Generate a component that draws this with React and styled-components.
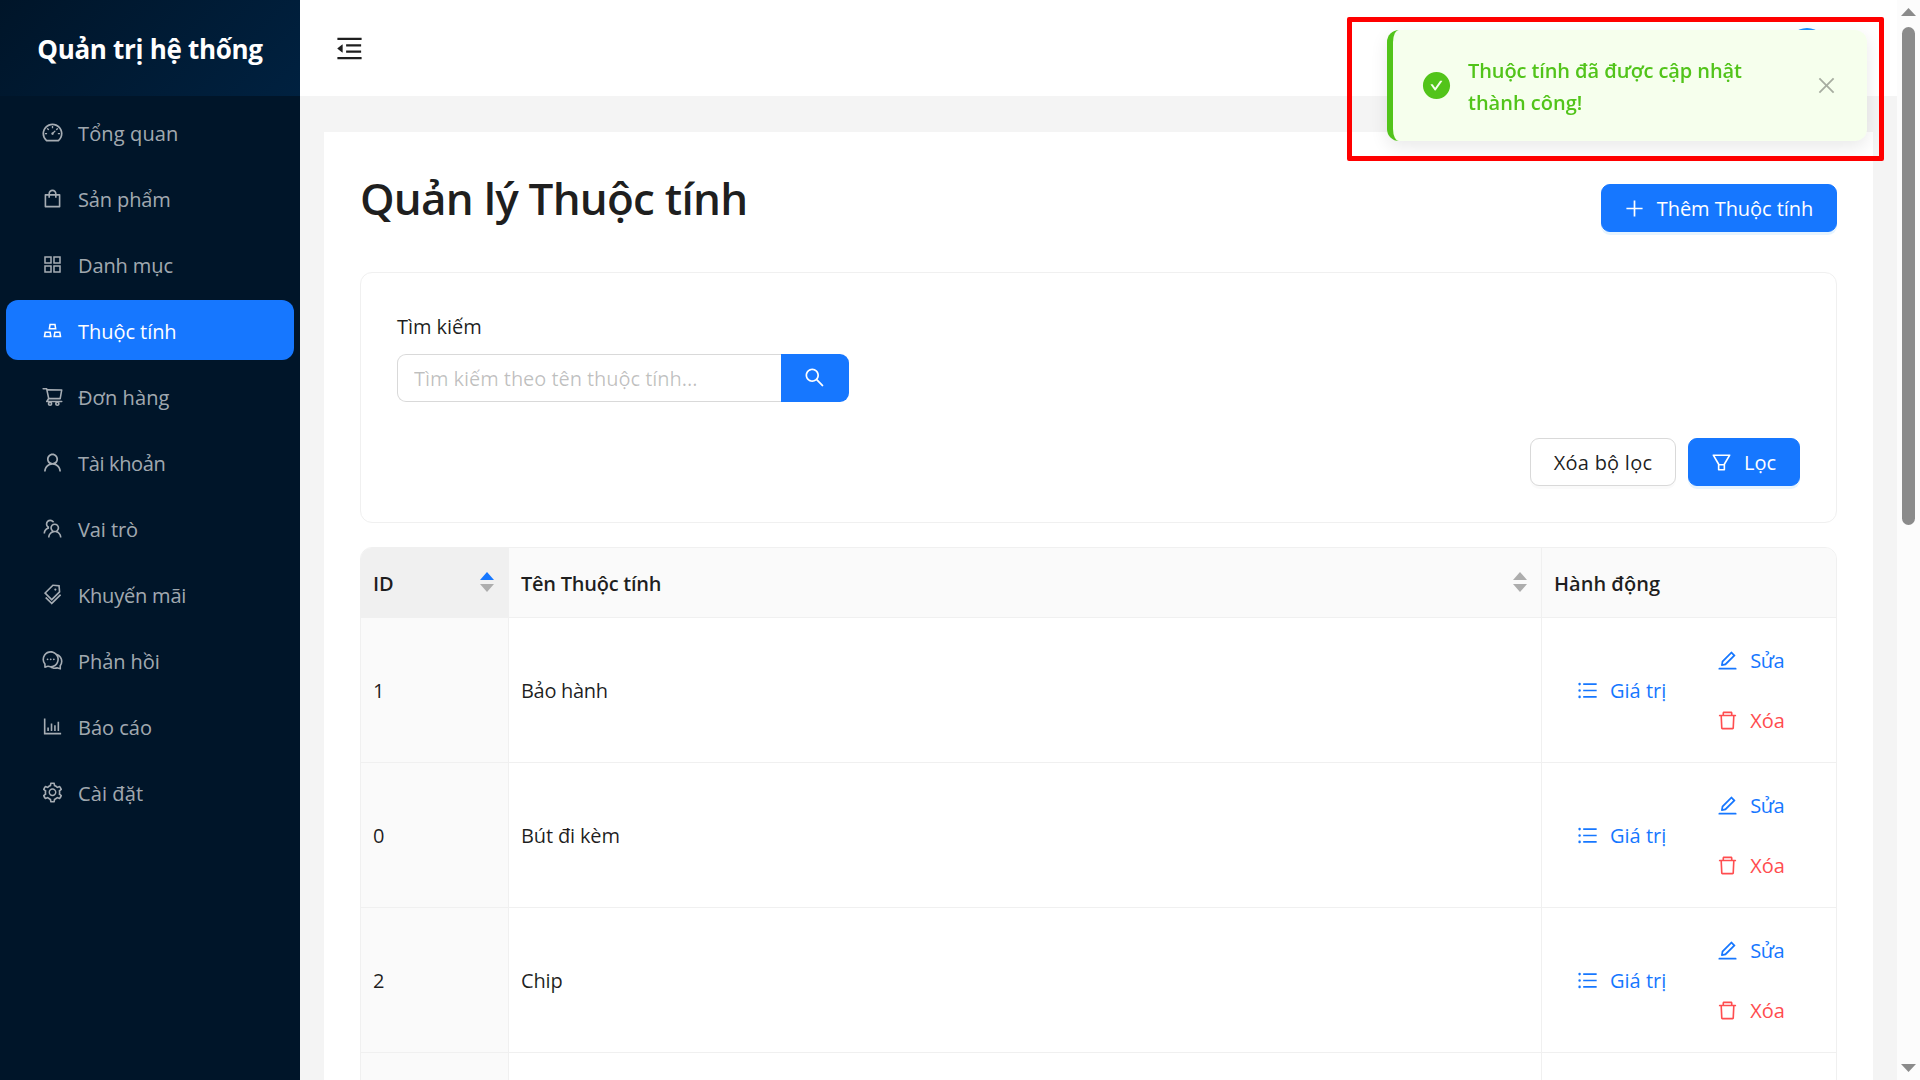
import React from "react";
import styled, { createGlobalStyle, css } from "styled-components";
import {
  AiOutlineDashboard,
  AiOutlineShopping,
  AiOutlineAppstore,
  AiOutlineGold,
  AiOutlineShoppingCart,
  AiOutlineUser,
  AiOutlineTeam,
  AiOutlineTags,
  AiOutlineComment,
  AiOutlineBarChart,
  AiOutlineSetting,
  AiOutlineMenuFold,
  AiOutlinePlus,
  AiOutlineSearch,
  AiOutlineFilter,
  AiOutlineUnorderedList,
  AiOutlineEdit,
  AiOutlineDelete,
  AiOutlineClose,
  AiFillCheckCircle,
} from "react-icons/ai";

const GlobalStyle = createGlobalStyle`
  *, *::before, *::after { box-sizing: border-box; }
  body {
    margin: 0;
    overflow: hidden;
    background: #f4f4f4;
    color: rgba(0, 0, 0, 0.88);
    font-family: "Open Sans", "Noto Sans", sans-serif;
    font-size: 20px;
    line-height: 33px;
  }
  button, input { font: inherit; color: inherit; }
`;

const Page = styled.div`
  display: grid;
  grid-template-columns: 300px minmax(0, 1fr) 23px;
  height: 1080px;
  overflow: hidden;
`;

const Text = styled.span`
  letter-spacing: ${(p) => p.$ls || 0}px;
  white-space: nowrap;
`;

const Sider = styled.aside`
  background: #001529;
`;

const Brand = styled.div`
  display: flex;
  align-items: center;
  justify-content: center;
  height: 96px;
  padding-top: 3px;
  background: linear-gradient(135deg, #001529 0%, #002140 100%);
  color: #fff;
  font-size: 26px;
  font-weight: 700;
`;

const Menu = styled.nav`
  display: flex;
  flex-direction: column;
  gap: 6px;
  padding: 6px;
`;

const MenuItem = styled.a`
  display: flex;
  align-items: center;
  gap: 14px;
  height: 60px;
  padding: 2px 0 0 35px;
  border-radius: 12px;
  color: ${(p) => (p.$active ? "#fff" : "rgba(255, 255, 255, 0.65)")};
  background: ${(p) => (p.$active ? "#1677ff" : "transparent")};

  svg {
    flex: none;
    width: 23px;
    height: 23px;
    margin-top: -1px;
  }
`;

const Main = styled.div`
  min-width: 0;
  overflow: hidden;
`;

const Header = styled.header`
  display: flex;
  align-items: center;
  justify-content: space-between;
  height: 96px;
  padding: 0 70px 0 34px;
  background: #fff;

  > svg {
    width: 31px;
    height: 31px;
    color: rgba(0, 0, 0, 0.88);
  }
`;

const Avatar = styled.div`
  width: 40px;
  height: 40px;
  border-radius: 50%;
  background: #1890ff;
`;

const Content = styled.main`
  margin: 36px 24px 0;
  padding: 36px;
  background: #fff;
`;

const TitleBar = styled.div`
  display: flex;
  align-items: flex-start;
  justify-content: space-between;
  height: 104px;
`;

const Title = styled.h1`
  margin: 0;
  font-size: 44px;
  font-weight: 600;
  line-height: 60px;
`;

const Button = styled.button`
  display: inline-flex;
  align-items: center;
  justify-content: center;
  gap: 11px;
  width: ${(p) => p.$w}px;
  height: 48px;
  padding: 0;
  border: 1px solid #d9d9d9;
  border-radius: 9px;
  background: #fff;
  box-shadow: 0 3px 0 rgba(0, 0, 0, 0.02);

  svg {
    flex: none;
    width: 23px;
    height: 23px;
  }

  ${(p) =>
    p.$primary &&
    css`
      padding-right: 2px;
      border-color: #1677ff;
      background: #1677ff;
      color: #fff;
      box-shadow: 0 3px 0 rgba(5, 145, 255, 0.1);
    `}
`;

const AddButton = styled(Button)`
  margin-top: 16px;
`;

const FilterCard = styled.section`
  display: flex;
  flex-direction: column;
  height: 251px;
  padding: 36px;
  border: 1px solid #f0f0f0;
  border-radius: 12px;
`;

const Label = styled.label`
  padding-top: 1px;
  margin-bottom: 11px;
`;

const SearchBox = styled.div`
  display: flex;
  width: 452px;
  height: 48px;
`;

const SearchInput = styled.input`
  flex: 1;
  min-width: 0;
  padding: 0 16px;
  border: 1px solid #d9d9d9;
  border-right: 0;
  border-radius: 9px 0 0 9px;
  outline: none;
  background: #fff;
  letter-spacing: -0.05px;

  &::placeholder {
    color: rgba(0, 0, 0, 0.25);
    opacity: 1;
  }
`;

const SearchButton = styled.button`
  display: grid;
  place-items: center;
  width: 68px;
  padding: 0 1px 1px 0;
  border: 0;
  border-radius: 0 9px 9px 0;
  background: #1677ff;
  color: #fff;

  svg {
    width: 23px;
    height: 23px;
  }
`;

const FilterActions = styled.div`
  display: flex;
  justify-content: flex-end;
  gap: 12px;
  margin-top: 36px;
`;

const Table = styled.div`
  margin-top: 24px;
  border: 1px solid #f0f0f0;
  border-radius: 12px 12px 0 0;
  overflow: hidden;
`;

const Row = styled.div`
  display: grid;
  grid-template-columns: 148px minmax(0, 1fr) 294px;
  height: ${(p) => (p.$head ? 70 : 145)}px;
  font-weight: ${(p) => (p.$head ? 600 : 400)};
`;

const Cell = styled.div`
  display: flex;
  align-items: center;
  justify-content: space-between;
  padding: 0 14px 0 12px;
  border-right: 1px solid #f0f0f0;
  border-bottom: 1px solid #f0f0f0;
  background: ${(p) => p.$bg || "#fff"};

  &:last-child {
    border-right: 0;
  }
`;

const HeadCell = styled(Cell)`
  padding-top: 2px;
`;

const Sorter = styled.span`
  display: flex;
  flex-direction: column;
  gap: 4px;
  margin-top: -3px;
`;

const Caret = styled.i`
  width: 14px;
  height: 8px;
  background: ${(p) => (p.$on ? "#1677ff" : "#adadad")};
  clip-path: ${(p) =>
    p.$down ? "polygon(0 0, 100% 0, 50% 100%)" : "polygon(50% 0, 100% 100%, 0 100%)"};
`;

const ActionCell = styled(Cell)`
  justify-content: flex-start;
  padding-left: 34px;
`;

const ActionStack = styled.div`
  display: flex;
  flex-direction: column;
  gap: 12px;
  margin-left: 50px;
`;

const LinkButton = styled.button`
  display: inline-flex;
  align-items: center;
  gap: 11px;
  height: 48px;
  padding: 0;
  border: 0;
  background: none;
  color: ${(p) => (p.$danger ? "#ff4d4f" : "#1677ff")};

  svg {
    flex: none;
    width: 23px;
    height: 23px;
  }
`;

const Scrollbar = styled.div`
  display: flex;
  flex-direction: column;
  align-items: center;
  justify-content: space-between;
  padding: 8px 0;
  background: #fcfcfc;
`;

const ScrollTop = styled.div`
  display: flex;
  flex-direction: column;
  align-items: center;
  gap: 11px;
`;

const Thumb = styled.div`
  width: 13px;
  height: 498px;
  border-radius: 7px;
  background: #8b8b8b;
`;

const Arrow = styled.i`
  width: 15px;
  height: 8px;
  background: #8b8b8b;
  clip-path: ${(p) =>
    p.$down ? "polygon(0 0, 100% 0, 50% 100%)" : "polygon(50% 0, 100% 100%, 0 100%)"};
`;

const Highlight = styled.div`
  position: fixed;
  top: 17px;
  left: 1347px;
  width: 537px;
  height: 144px;
  border: 5px solid #f00;
  border-radius: 2px;
  z-index: 3;
`;

const Toast = styled.div`
  position: fixed;
  top: 30px;
  left: 1387px;
  z-index: 2;
  display: flex;
  align-items: center;
  width: 480px;
  height: 111px;
  padding: 0 29px 0 30px;
  border-left: 6px solid #52c41a;
  border-radius: 12px;
  background: #f6ffed;
  box-shadow: 0 6px 18px rgba(0, 0, 0, 0.09);
  color: #52c41a;
  font-weight: 600;
  line-height: 32px;
`;

const ToastIcon = styled(AiFillCheckCircle)`
  flex: none;
  width: 31px;
  height: 31px;
  margin: 0 16px 0 -2px;
`;

const ToastBody = styled.div`
  display: flex;
  flex: 1;
  flex-direction: column;
  padding-top: 2px;
`;

const ToastClose = styled(AiOutlineClose)`
  flex: none;
  width: 23px;
  height: 23px;
  color: rgba(0, 0, 0, 0.32);
`;

const menu = [
  { icon: AiOutlineDashboard, label: "Tổng quan", ls: 0.13 },
  { icon: AiOutlineShopping, label: "Sản phẩm", ls: -0.12 },
  { icon: AiOutlineAppstore, label: "Danh mục", ls: -0.1 },
  { icon: AiOutlineGold, label: "Thuộc tính", ls: -0.05, active: true },
  { icon: AiOutlineShoppingCart, label: "Đơn hàng", ls: 0.1 },
  { icon: AiOutlineUser, label: "Tài khoản", ls: -0.35 },
  { icon: AiOutlineTeam, label: "Vai trò", ls: -0.1 },
  { icon: AiOutlineTags, label: "Khuyến mãi", ls: -0.2 },
  { icon: AiOutlineComment, label: "Phản hồi", ls: -0.05 },
  { icon: AiOutlineBarChart, label: "Báo cáo", ls: 0 },
  { icon: AiOutlineSetting, label: "Cài đặt", ls: 0.1 },
];

const rows = [
  { id: "1", name: "Bảo hành", ls: -0.3 },
  { id: "0", name: "Bút đi kèm", ls: -0.15 },
  { id: "2", name: "Chip", ls: -0.15 },
  { id: "", name: "" },
];

function SortIcon({ asc }) {
  return (
    <Sorter>
      <Caret $on={asc} />
      <Caret $down />
    </Sorter>
  );
}

function AttributeRow({ id, name, ls }) {
  return (
    <Row>
      <Cell $bg="#fafafa">{id}</Cell>
      <Cell>
        <Text $ls={ls}>{name}</Text>
      </Cell>
      <ActionCell>
        {id && (
          <>
            <LinkButton>
              <AiOutlineUnorderedList />
              <Text>Giá trị</Text>
            </LinkButton>
            <ActionStack>
              <LinkButton>
                <AiOutlineEdit />
                <Text $ls={-0.5}>Sửa</Text>
              </LinkButton>
              <LinkButton $danger>
                <AiOutlineDelete />
                <Text>Xóa</Text>
              </LinkButton>
            </ActionStack>
          </>
        )}
      </ActionCell>
    </Row>
  );
}

export default function App() {
  return (
    <>
      <GlobalStyle />
      <Page>
        <Sider>
          <Brand>
            <Text $ls={-0.3}>Quản trị hệ thống</Text>
          </Brand>
          <Menu>
            {menu.map(({ icon: Icon, label, ls, active }) => (
              <MenuItem key={label} $active={active}>
                <Icon />
                <Text $ls={ls}>{label}</Text>
              </MenuItem>
            ))}
          </Menu>
        </Sider>

        <Main>
          <Header>
            <AiOutlineMenuFold />
            <Avatar />
          </Header>
          <Content>
            <TitleBar>
              <Title>
                <Text $ls={-0.77}>Quản lý Thuộc tính</Text>
              </Title>
              <AddButton $primary $w={236}>
                <AiOutlinePlus />
                <Text $ls={-0.05}>Thêm Thuộc tính</Text>
              </AddButton>
            </TitleBar>

            <FilterCard>
              <Label htmlFor="search">
                <Text $ls={-0.05}>Tìm kiếm</Text>
              </Label>
              <SearchBox>
                <SearchInput id="search" placeholder="Tìm kiếm theo tên thuộc tính..." />
                <SearchButton>
                  <AiOutlineSearch />
                </SearchButton>
              </SearchBox>
              <FilterActions>
                <Button $w={146}>
                  <Text $ls={0.25}>Xóa bộ lọc</Text>
                </Button>
                <Button $primary $w={112}>
                  <AiOutlineFilter />
                  <Text>Lọc</Text>
                </Button>
              </FilterActions>
            </FilterCard>

            <Table>
              <Row $head>
                <HeadCell $bg="#f0f0f0">
                  <Text>ID</Text>
                  <SortIcon asc />
                </HeadCell>
                <HeadCell $bg="#fafafa">
                  <Text $ls={-0.25}>Tên Thuộc tính</Text>
                  <SortIcon />
                </HeadCell>
                <HeadCell $bg="#fafafa">
                  <Text $ls={0.02}>Hành động</Text>
                </HeadCell>
              </Row>
              {rows.map((row) => (
                <AttributeRow key={row.id} {...row} />
              ))}
            </Table>
          </Content>
        </Main>

        <Scrollbar>
          <ScrollTop>
            <Arrow />
            <Thumb />
          </ScrollTop>
          <Arrow $down />
        </Scrollbar>
      </Page>

      <Toast>
        <ToastIcon />
        <ToastBody>
          <Text $ls={-0.1}>Thuộc tính đã được cập nhật</Text>
          <Text $ls={0}>thành công!</Text>
        </ToastBody>
        <ToastClose />
      </Toast>
      <Highlight />
    </>
  );
}
